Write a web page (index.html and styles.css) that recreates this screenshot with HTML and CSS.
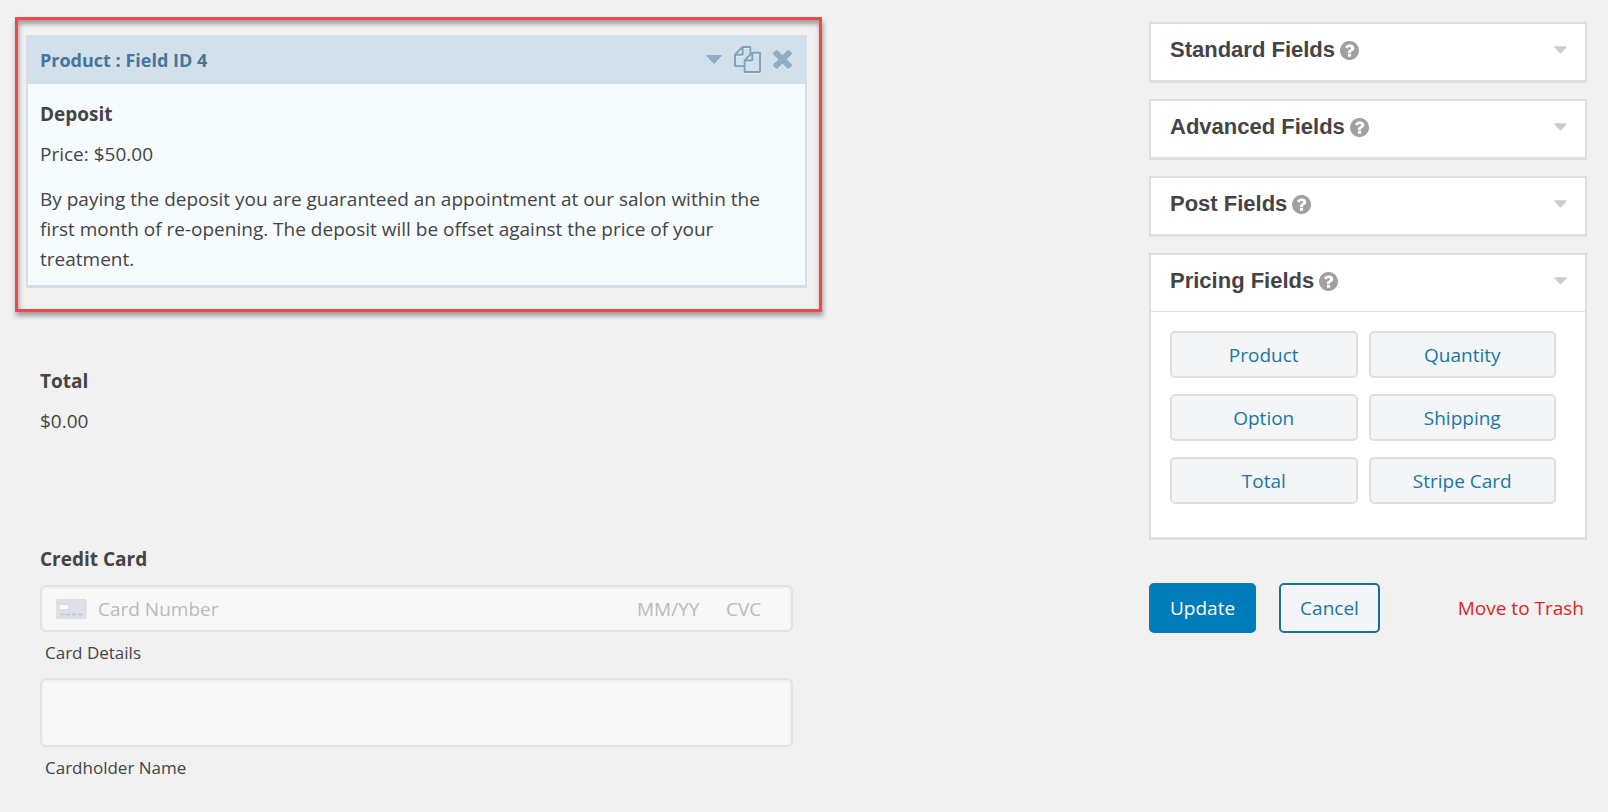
FILE: index.html
```html
<!DOCTYPE html>
<html lang="en">
<head>
<meta charset="utf-8">
<title>Form Editor</title>
<meta name="viewport" content="width=device-width, initial-scale=1">
<link rel="stylesheet" href="styles.css">
</head>
<body>
<svg class="sprite" aria-hidden="true">
  <symbol id="caret" viewBox="0 0 16 9"><path d="M1 0h14q1.500 0 .5 1.200L9 8.300q-1 1-2 0L.5 1.200Q-.5 0 1 0z"/></symbol>
  <symbol id="help" viewBox="0 0 1536 1536"><path d="M896 1248v-192q0-14-9-23t-23-9H672q-14 0-23 9t-9 23v192q0 14 9 23t23 9h192q14 0 23-9t9-23zm256-672q0-88-55.500-163T958 297t-170-41q-243 0-371 213-15 24 8 42l132 100q7 6 19 6 16 0 25-12 53-68 86-92 34-24 86-24 48 0 85.500 26t37.500 59q0 38-20 61t-68 45q-63 28-115.500 86.500T640 892v36q0 14 9 23t23 9h192q14 0 23-9t9-23q0-19 21.500-49.500T972 829q32-18 49-28.500t46-35 44.500-48 28-60.500 12.500-81zm384 192q0 209-103 385.500T1153.500 1433 768 1536t-385.500-103T103 1153.500 0 768t103-385.500T382.500 103 768 0t385.500 103T1433 382.500 1536 768z"/></symbol>
</svg>
<div class="editor">
  <main class="form">
    <div class="highlight">
      <section class="field-card">
        <header class="field-card-head">
          <span class="field-card-title">Product : Field ID 4</span>
          <button class="icon-btn caret-btn" type="button" aria-label="Expand"><svg class="card-caret"><use href="#caret"/></svg></button>
          <button class="icon-btn" type="button" aria-label="Duplicate"><svg class="copy-icon" viewBox="0 0 1792 1792"><path d="M1696 384q40 0 68 28t28 68v1216q0 40-28 68t-68 28H736q-40 0-68-28t-28-68v-288H96q-40 0-68-28t-28-68V640q0-40 20-88t48-76L476 68q28-28 76-48t88-20h416q40 0 68 28t28 68v328q68-40 128-40h416zm-544 213L853 896h299V597zM512 213L213 512h299V213zm196 647l316-316V128H640v416q0 40-28 68t-68 28H128v640h512v-256q0-40 20-88t48-76zm956 804V512h-384v416q0 40-28 68t-68 28H768v640h896z"/></svg></button>
          <button class="icon-btn" type="button" aria-label="Delete"><svg class="close-icon" viewBox="110 366 1188 1188"><path d="M1298 1322q0 40-28 68l-136 136q-28 28-68 28t-68-28L704 1232l-294 294q-28 28-68 28t-68-28l-136-136q-28-28-28-68t28-68l294-294-294-294q-28-28-28-68t28-68l136-136q28-28 68-28t68 28l294 294 294-294q28-28 68-28t68 28l136 136q28 28 28 68t-28 68L976 960l294 294q28 28 28 68z"/></svg></button>
        </header>
        <div class="field-card-body">
          <h3 class="label">Deposit</h3>
          <p class="value">Price: $50.00</p>
          <p class="description">By paying the deposit you are guaranteed an appointment at our salon within the first month of re-opening. The deposit will be offset against the price of your treatment.</p>
        </div>
      </section>
    </div>
    <section class="field">
      <h3 class="label">Total</h3>
      <p class="value">$0.00</p>
    </section>
    <section class="field">
      <h3 class="label">Credit Card</h3>
      <div class="card-input">
        <svg class="card-icon" viewBox="0 0 31 20"><rect width="31" height="20" rx="2" fill="#dce0e8"/><rect x="4" y="6" width="8" height="4" rx="1" fill="#fff"/><path d="M4 15.500h23" stroke="#bcc2cd" stroke-width="1.500" stroke-dasharray="4.500 1.500"/></svg>
        <input class="card-number" id="card-number" type="text" placeholder="Card Number">
        <input class="card-expiry" type="text" placeholder="MM/YY" aria-label="Expiry date">
        <input class="card-cvc" type="text" placeholder="CVC" aria-label="Security code">
      </div>
      <label class="sub-label" for="card-number">Card Details</label>
      <input class="name-input" id="holder" type="text">
      <label class="sub-label" for="holder">Cardholder Name</label>
    </section>
  </main>
  <aside class="sidebar">
    <section class="panel"><h2 class="panel-head">Standard Fields <svg class="help"><use href="#help"/></svg><svg class="panel-caret"><use href="#caret"/></svg></h2></section>
    <section class="panel"><h2 class="panel-head">Advanced Fields <svg class="help"><use href="#help"/></svg><svg class="panel-caret"><use href="#caret"/></svg></h2></section>
    <section class="panel"><h2 class="panel-head">Post Fields <svg class="help"><use href="#help"/></svg><svg class="panel-caret"><use href="#caret"/></svg></h2></section>
    <section class="panel">
      <h2 class="panel-head">Pricing Fields <svg class="help"><use href="#help"/></svg><svg class="panel-caret"><use href="#caret"/></svg></h2>
      <div class="field-buttons">
        <button class="field-btn" type="button">Product</button>
        <button class="field-btn" type="button">Quantity</button>
        <button class="field-btn" type="button">Option</button>
        <button class="field-btn" type="button">Shipping</button>
        <button class="field-btn" type="button">Total</button>
        <button class="field-btn" type="button">Stripe Card</button>
      </div>
    </section>
    <div class="actions">
      <button class="btn btn-primary" type="button">Update</button>
      <button class="btn btn-outline" type="button">Cancel</button>
      <a class="trash" href="#">Move to Trash</a>
    </div>
  </aside>
</div>
</body>
</html>
```
FILE: styles.css
```css
* { box-sizing: border-box; }

body {
  margin: 0;
  background: #f1f1f1;
  color: #444;
  font: 19px/30px "Segoe UI", "Open Sans", "Noto Sans", sans-serif;
}

h2, h3, p { margin: 0; }
button, input { font: inherit; }
button { cursor: pointer; }
.sprite { display: none; }

.editor {
  display: grid;
  grid-template-columns: minmax(0, 807px) 438px;
  justify-content: space-between;
  gap: 24px;
  padding: 17px 21px 24px 15px;
}

/* Form preview */
.highlight {
  padding: 15px 12px 21px 8px;
  border: 3px solid #ec4a4c;
  box-shadow: 1px 4px 5px rgba(0, 0, 0, .35), inset 1px 4px 5px rgba(0, 0, 0, .35);
}

.field-card {
  border: 2px solid #d2e0eb;
  border-top: 0;
  border-bottom: 3px solid #d3dde4;
  background: #f6fbfe;
}

.field-card-head {
  display: flex;
  align-items: center;
  height: 49px;
  padding: 0 13px 0 12px;
  background: #d2e0eb;
}

.field-card-title {
  flex: 1;
  color: #47759b;
  font-size: 18px;
  font-weight: 700;
}

.icon-btn {
  display: flex;
  margin-left: 12px;
  padding: 0;
  border: 0;
  background: none;
  color: #8faec5;
}

.icon-btn svg { fill: currentColor; filter: drop-shadow(0 1px 0 #e9f1f7); }
.card-caret { width: 16px; height: 9px; }
.copy-icon { width: 27px; height: 27px; color: #7ba2ba; }
.close-icon { width: 19px; height: 19px; }

.field-card-body { padding: 15px 12px 11px; }

.label { font-size: 19px; font-weight: 700; }
.value { margin-top: 10px; }
.description { margin-top: 15px; }

.field { margin: 54px 29px 0 25px; }
.field + .field { margin-top: 108px; }

.card-input {
  display: flex;
  align-items: center;
  height: 47px;
  margin-top: 11px;
  padding: 0 0 0 14px;
}

.card-input, .name-input {
  border: 2px solid #e3e3e3;
  border-radius: 6px;
  background: #f8f8f8;
  box-shadow: inset 0 1px 3px rgba(0, 0, 0, .06);
}

.card-input input {
  min-width: 0;
  padding: 0;
  border: 0;
  background: none;
}

.card-input input::placeholder { color: #bababa; }
.card-icon { width: 31px; height: 20px; margin-right: 11px; }
.card-input .card-number { flex: 1; }
.card-input .card-expiry { width: 89px; }
.card-input .card-cvc { width: 65px; }

.name-input {
  display: block;
  width: 100%;
  height: 69px;
  margin-top: 13px;
  padding: 0 12px;
}

.sub-label {
  display: block;
  margin: 9px 0 0 5px;
  font-size: 17px;
  line-height: 24px;
}

/* Field library */
.sidebar {
  display: flex;
  flex-direction: column;
  gap: 16px;
  padding-top: 5px;
}

.panel {
  border: 2px solid #dfdfdf;
  border-bottom-width: 3px;
  background: #fff;
}

.panel-head {
  display: flex;
  align-items: center;
  height: 56px;
  padding: 0 18px 4px 19px;
  font: 700 22px/28px Arial, "Liberation Sans", sans-serif;
}

.help { width: 19px; height: 19px; margin-left: 5px; fill: #a0a0a0; }
.panel-caret { width: 13px; height: 8px; margin-left: auto; fill: #cbcbcb; }

.field-buttons {
  display: grid;
  grid-template-columns: 1fr 1fr;
  gap: 16px 11px;
  padding: 19px 29px 33px 19px;
  border-top: 1px solid #dfdfdf;
}

.field-btn {
  height: 47px;
  padding: 0;
  border: 2px solid #dedfdf;
  border-radius: 5px;
  background: #f3f5f6;
  color: #1a77a3;
}

.actions {
  display: flex;
  align-items: center;
  margin-top: 27px;
  padding-right: 3px;
}

.btn {
  height: 50px;
  padding: 0 19px;
  border: 2px solid #007cba;
  border-radius: 5px;
}

.btn-primary { background: #007cba; color: #fff; font-weight: 500; }
.btn-outline { margin-left: 23px; border-color: #19709a; background: #f3f5f6; color: #1a77a3; }
.trash { margin-left: auto; color: #e02424; text-decoration: none; }
```
